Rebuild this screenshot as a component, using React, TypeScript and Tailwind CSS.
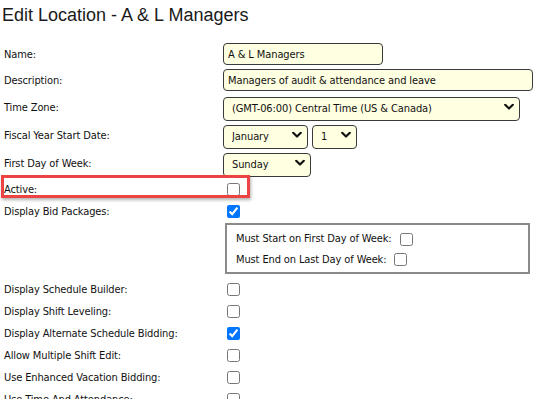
import type { ReactNode } from 'react';

const labelFont = { fontFamily: '"DejaVu Sans Condensed", "DejaVu Sans", sans-serif' };

function Chevron() {
  return (
    <svg width="10" height="7" viewBox="0 0 10 7" className="pointer-events-none absolute right-[6px] top-1/2 -translate-y-1/2">
      <path d="M1.2 1.3 L5 5 L8.8 1.3" fill="none" stroke="#111" strokeWidth="2.2" strokeLinecap="round" strokeLinejoin="round" />
    </svg>
  );
}

function Select({ value, options, width }: { value: string; options: string[]; width: string }) {
  return (
    <div className={`relative h-[24px] ${width}`}>
      <select
        defaultValue={value}
        className="h-full w-full appearance-none rounded-[4px] border border-[#3a3a3a] bg-[#ffffe1] pl-[8px] pr-[20px] text-[11px] tracking-[-0.1px] text-[#111] outline-none"
        style={labelFont}
      >
        {options.map((o) => (
          <option key={o}>{o}</option>
        ))}
      </select>
      <Chevron />
    </div>
  );
}

function Row({ label, children, h = 'h-[22px]', className = '' }: { label: string; children: ReactNode; h?: string; className?: string }) {
  return (
    <div className={`grid grid-cols-[223px_1fr] items-center ${h} ${className}`}>
      <div className="translate-y-[1px] pl-[4px] text-[11px] tracking-[-0.12px] text-[#111]">{label}</div>
      <div className="flex items-center gap-[4px]">{children}</div>
    </div>
  );
}

function Check({ checked = false }: { checked?: boolean }) {
  return <input type="checkbox" defaultChecked={checked} className="ml-[4px] h-[13px] w-[13px]" />;
}

export default function App() {
  return (
    <div className="h-[399px] w-[554px] overflow-hidden bg-white" style={labelFont}>
      <div className="h-[43px] pl-[2px] pt-[5px]">
        <h1 className="text-[18px] leading-[21px] text-[#1a1a1a]" style={{ fontFamily: '"Liberation Sans", Arial, sans-serif' }}>
          Edit Location - A &amp; L Managers
        </h1>
      </div>

      <Row label="Name:" className="mb-[4px]">
        <input
          defaultValue="A & L Managers"
          className="h-[22px] w-[160px] rounded-[4px] border border-[#3a3a3a] bg-[#ffffe1] px-[4px] text-[11px] tracking-[-0.1px] text-[#111] outline-none"
          style={labelFont}
        />
      </Row>
      <Row label="Description:" className="mb-[4px]">
        <input
          defaultValue="Managers of audit & attendance and leave"
          className="h-[22px] w-[310px] rounded-[4px] border border-[#3a3a3a] bg-[#ffffe1] px-[4px] text-[11px] tracking-[-0.1px] text-[#111] outline-none"
          style={labelFont}
        />
      </Row>
      <Row label="Time Zone:" h="h-[24px]" className="mb-[4px]">
        <Select value="(GMT-06:00) Central Time (US & Canada)" options={['(GMT-06:00) Central Time (US & Canada)']} width="w-[297px]" />
      </Row>
      <Row label="Fiscal Year Start Date:" h="h-[24px]" className="mb-[4px]">
        <Select value="January" options={['January', 'February', 'March']} width="w-[85px]" />
        <Select value="1" options={['1', '2', '3']} width="w-[45px]" />
      </Row>
      <Row label="First Day of Week:" h="h-[24px]" className="mb-[3px]">
        <Select value="Sunday" options={['Sunday', 'Monday']} width="w-[88px]" />
      </Row>

      <div className="relative">
        <Row label="Active:">
          <Check />
        </Row>
        <div className="pointer-events-none absolute left-[1px] top-[-3px] h-[23px] w-[249px] border-[3px] border-[#ee4343] shadow-[1px_2px_3px_rgba(0,0,0,0.3)]" />
      </div>
      <Row label="Display Bid Packages:">
        <Check checked />
      </Row>

      <div className="ml-[225px] mt-[1px] flex h-[51px] w-[305px] flex-col justify-center gap-[4px] border-2 border-[#8a8a8a] pl-[9px] text-[11px] tracking-[-0.12px] text-[#111]">
        <div className="flex translate-y-[1px] items-center gap-[4px]">
          <span>Must Start on First Day of Week:</span>
          <input type="checkbox" className="ml-[4px] h-[13px] w-[13px]" />
        </div>
        <div className="flex translate-y-[1px] items-center gap-[4px]">
          <span>Must End on Last Day of Week:</span>
          <input type="checkbox" className="ml-[4px] h-[13px] w-[13px]" />
        </div>
      </div>

      <div className="mt-[4px]">
        <Row label="Display Schedule Builder:">
          <Check />
        </Row>
        <Row label="Display Shift Leveling:">
          <Check />
        </Row>
        <Row label="Display Alternate Schedule Bidding:">
          <Check checked />
        </Row>
        <Row label="Allow Multiple Shift Edit:">
          <Check />
        </Row>
        <Row label="Use Enhanced Vacation Bidding:">
          <Check />
        </Row>
        <Row label="Use Time And Attendance:">
          <Check />
        </Row>
      </div>
    </div>
  );
}
